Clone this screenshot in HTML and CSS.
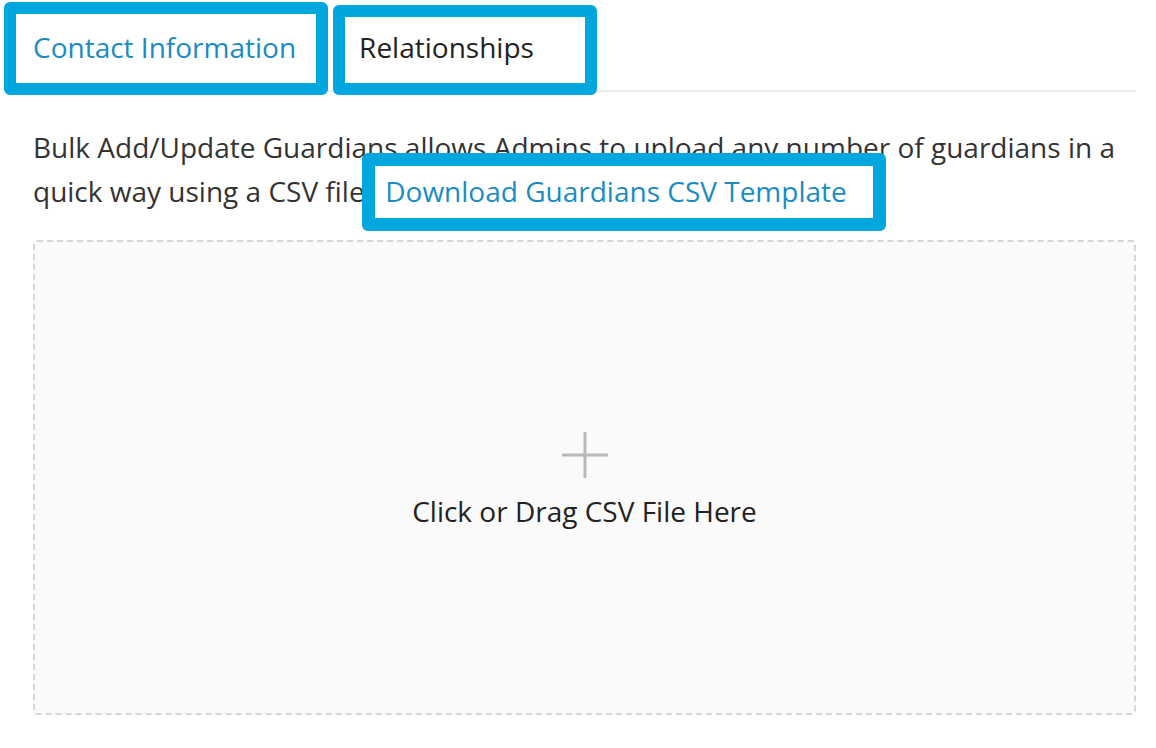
FILE: index.html
```html
<!DOCTYPE html>
<html lang="en">

<head>
    <meta charset="UTF-8">
    <meta name="viewport" content="width=device-width, initial-scale=1.0">
    <title>Bulk Add/Update Guardians</title>

    <link rel="stylesheet" href="styles.css">
</head>

<body>
    <div class="page">
        <div class="tabs">
            <a class="tab active" href="#">Contact Information</a>
            <a class="tab" href="#">Relationships</a>
        </div>

        <p class="intro">
            Bulk Add/Update Guardians allows Admins to upload any number of guardians in a quick way using a CSV file.
            <a class="link" href="#">Download Guardians CSV Template</a>
        </p>

        <div class="dropzone">
            <svg class="plus" width="46" height="46" viewBox="0 0 46 46">
                <path d="M23 0V46M0 23H46" stroke="#b8b8b8" stroke-width="3" fill="none" />
            </svg>
            <div class="drop-text">Click or Drag CSV File Here</div>
        </div>

        <!-- highlight boxes drawn on top of the screenshot -->
        <div class="mark mark-contact"></div>
        <div class="mark mark-relations"></div>
        <div class="mark mark-template"></div>
    </div>
</body>

</html>
```

FILE: styles.css
```css
body {
    margin: 0;
    background-color: #fff;
    font-family: "Open Sans", "Noto Sans", sans-serif;
    color: #333;
}

.page {
    position: relative;
    width: 1103px;
    padding-left: 33px;
}

.tabs {
    display: flex;
    border-bottom: 2px solid #ececec;
    height: 90px;
}

.tab {
    display: block;
    padding-top: 28px;
    font-size: 28px;
    line-height: 38px;
    color: #222;
    text-decoration: none;
    margin-right: 63px;
}

.tab.active {
    color: #1a8cc2;
}

.intro {
    margin: 33px 0 0 0;
    font-size: 28px;
    line-height: 44px;
}

.link {
    color: #1a8cc2;
    text-decoration: none;
    padding-left: 6px;
}

.dropzone {
    margin-top: 27px;
    height: 475px;
    border: 2px dashed #d6d6d6;
    border-radius: 4px;
    background-color: #fafafa;
    display: flex;
    flex-direction: column;
    align-items: center;
    justify-content: center;
    padding-top: 10px;
    box-sizing: border-box;
}

.plus {
    display: block;
    margin-bottom: 11px;
}

.drop-text {
    font-size: 28px;
    line-height: 44px;
    color: #222;
}

.mark {
    position: absolute;
    border: 12px solid #00a7df;
    border-radius: 6px;
    box-sizing: border-box;
}

.mark-contact {
    left: 4px;
    top: 2px;
    width: 324px;
    height: 93px;
}

.mark-relations {
    left: 333px;
    top: 5px;
    width: 264px;
    height: 90px;
}

.mark-template {
    left: 362px;
    top: 153px;
    width: 524px;
    height: 78px;
    border-width: 13px;
}
```
